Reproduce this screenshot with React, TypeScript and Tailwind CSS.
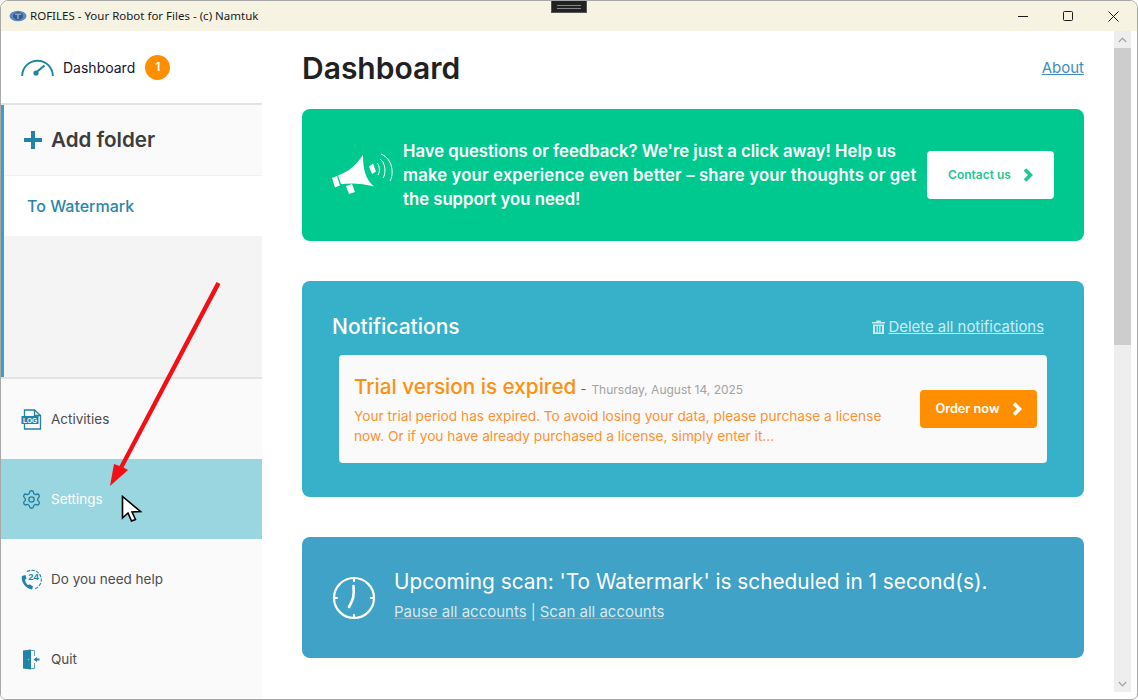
import React from "react";
import { Settings } from "lucide-react";

const font = "font-['Inter','Liberation_Sans',sans-serif]";

function Chevron({ className }: { className: string }) {
  return (
    <svg viewBox="0 0 10 14" className={className} fill="none" stroke="currentColor" strokeWidth="3.6">
      <path d="M2 1.5 L7.5 7 L2 12.5" />
    </svg>
  );
}

function Gauge() {
  return (
    <svg width="33" height="20" viewBox="0 0 33 20" fill="none" stroke="#2283a8" strokeWidth="1.9">
      <path d="M1.2 19 A15.3 15.3 0 0 1 31.8 19" />
      <path d="M15 15.5 L23.5 8.5" strokeWidth="2.2" />
      <circle cx="15" cy="16" r="2.6" fill="#2283a8" stroke="none" />
    </svg>
  );
}

function LogIcon() {
  return (
    <svg width="21" height="21" viewBox="0 0 21 21" fill="none" stroke="#2283a8" strokeWidth="1.3">
      <path d="M3.5 7 V1 H13.5 L19.5 6.5 V20 H3.5 V15" />
      <path d="M13.5 1 V6.5 H19.5" />
      <rect x="0.5" y="7" width="17" height="8" fill="#2283a8" stroke="none" />
      <text x="9" y="13.6" fontSize="6.5" fontWeight="700" fill="#fff" stroke="none" textAnchor="middle" fontFamily="Liberation Sans">LOG</text>
    </svg>
  );
}

function HelpIcon() {
  return (
    <svg width="21" height="21" viewBox="0 0 21 21" fill="none" stroke="#2283a8" strokeWidth="1.1">
      <path d="M6 2.5 A9.5 9.5 0 0 1 20.3 10.5 A9.5 9.5 0 0 1 14 19.7" strokeDasharray="3.4 1.2" />
      <path d="M1 7 C-0.5 12 4 19.5 11 20.5 L12 17.5 L8.5 15.2 L7 16.2 C5 14.5 4.2 12.5 4 10.5 L5.5 10 L4.5 6 Z" fill="#2283a8" stroke="none" />
      <text x="12.5" y="11.3" fontSize="9.5" fontWeight="700" fill="#2283a8" stroke="none" textAnchor="middle" fontFamily="Liberation Sans">24</text>
    </svg>
  );
}

function QuitIcon() {
  return (
    <svg width="18" height="21" viewBox="0 0 18 21" fill="none" stroke="#5aa7c4" strokeWidth="1">
      <path d="M1 1.5 L9 0.5 V20.5 L1 19.5 Z" fill="#2283a8" stroke="none" />
      <path d="M9 1.5 H12.5 V7 M12.5 14 V19.5 H9" />
      <path d="M17.5 10.5 H13" stroke="#2283a8" strokeWidth="1.8" />
      <path d="M15 8 L11.5 10.5 L15 13 Z" fill="#2283a8" stroke="none" />
      <circle cx="6.5" cy="10.5" r="0.8" fill="#8cc4da" stroke="none" />
    </svg>
  );
}

function Megaphone() {
  return (
    <svg width="62" height="44" viewBox="0 0 62 44" fill="#fff" stroke="none">
      <path d="M6 22.5 C18 18 24 12 31 2 C31 15 33 26 42 33.5 C30 30 20 30 9 31 Z" />
      <path d="M0 25 L5 23 L8 32.5 L3 34.5 Z" />
      <path d="M14 33 L20 31 L23 39 L17 41 Z" />
      <path d="M37 13.5 L41 10.5 L44 18.5 L40 21 Z" />
      <g fill="none" stroke="#fff" strokeWidth="1">
        <path d="M45 10 C48 13 48 19 46 22" />
        <path d="M48 6 C54 10 54 21 51 25" />
        <path d="M49 1 C61 6 62 21 58 28" />
      </g>
    </svg>
  );
}

function Clock() {
  return (
    <svg width="44" height="44" viewBox="0 0 44 44" fill="none" stroke="#fff" strokeWidth="2.2" strokeLinecap="round">
      <circle cx="22" cy="22" r="20" />
      <path d="M22 2 V5 M22 39 V42 M2 22 H5 M39 22 H42" />
      <path d="M21.5 10 C22.5 20 21 24 17 31" strokeWidth="2.6" />
    </svg>
  );
}

function Trash() {
  return (
    <svg width="13" height="14" viewBox="0 0 13 14" fill="#c9eef5">
      <path d="M4.5 0.5 H8.5 L9 2 H13 V3.5 H0 V2 H4 Z" />
      <path d="M1 4.5 H12 V14 H1 Z M3 6 V12.5 H4.5 V6 Z M5.8 6 V12.5 H7.2 V6 Z M8.5 6 V12.5 H10 V6 Z" fillRule="evenodd" />
    </svg>
  );
}

function NavRow({ icon, label, active }: { icon: React.ReactNode; label: string; active?: boolean }) {
  return (
    <div className={`flex h-20 items-center pl-[20px] ${active ? "bg-[#9ad6df]" : "bg-[#fafafa]"}`}>
      <div className="flex w-[30px] shrink-0 items-center">{icon}</div>
      <span className={`text-[13.5px] ${active ? "text-white" : "text-[#4d4d4d]"}`}>{label}</span>
    </div>
  );
}

export default function App() {
  return (
    <div className={`${font} relative flex h-[700px] w-[1138px] flex-col overflow-hidden rounded-t-lg rounded-b-[6px] border border-[#a8a8a8] bg-white`}>
      {/* Title bar */}
      <div className="flex h-[30px] shrink-0 items-center bg-[#f7f3e3]">
        <svg width="18" height="12" viewBox="0 0 18 12" className="ml-[8px]">
          <ellipse cx="9" cy="6" rx="8.5" ry="5.2" fill="#5b8ac2" />
          <ellipse cx="9" cy="6" rx="5" ry="4" fill="#3a5a8c" />
          <path d="M6 3.5 H12 V5 H9.8 V9 H8.2 V5 H6 Z" fill="#86a6cc" />
        </svg>
        <span className="ml-[3px] font-['Noto_Sans',sans-serif] text-[11.5px] text-[#1a1a1a]">ROFILES - Your Robot for Files - (c) Namtuk</span>
        <div className="flex-1" />
        <div className="flex w-[125px] items-center text-[#1a1a1a]">
          <span className="ml-[6px] h-px w-[10px] bg-[#1a1a1a]" />
          <span className="ml-[35px] h-[10px] w-[10px] rounded-[1.5px] border border-[#1a1a1a]" />
          <svg width="11" height="11" viewBox="0 0 11 11" className="ml-[35px]" stroke="#1a1a1a" strokeWidth="1"><path d="M0.5 0.5 L10.5 10.5 M10.5 0.5 L0.5 10.5" /></svg>
        </div>
      </div>

      <div className="flex min-h-0 flex-1">
        {/* Sidebar */}
        <aside className="flex w-[261px] shrink-0 flex-col">
          <div className="flex h-[72px] shrink-0 items-center pl-[20px]">
            <Gauge />
            <span className="ml-[9px] text-[14px] text-[#15132e]">Dashboard</span>
            <span className="ml-[10px] flex h-[25px] w-[25px] items-center justify-center rounded-full bg-[#ff8f00] text-[12px] font-semibold text-white">1</span>
          </div>
          <div className="h-[2px] shrink-0 bg-[#e3e3e3]" />
          <div className="flex h-[272px] shrink-0 flex-col border-l-[3px] border-[#3d9fc4] bg-[#f4f4f4]">
            <div className="flex h-[71px] items-center border-b border-[#f1f1f1] bg-[#fafafa] pl-[20px]">
              <svg width="18" height="18" viewBox="0 0 18 18" fill="#2283a8"><path d="M7 0 H11 V7 H18 V11 H11 V18 H7 V11 H0 V7 H7 Z" /></svg>
              <span className="ml-[9px] text-[20.6px] font-semibold leading-none text-[#3d3d3d]">Add folder</span>
            </div>
            <div className="flex h-[60px] items-center bg-white pl-[23px] text-[16px] font-medium text-[#2a86ab]">To Watermark</div>
          </div>
          <div className="h-[2px] shrink-0 bg-[#e3e3e3]" />
          <NavRow icon={<LogIcon />} label="Activities" />
          <NavRow icon={<Settings size={21} strokeWidth={1.5} color="#1f7ea3" />} label="Settings" active />
          <NavRow icon={<HelpIcon />} label="Do you need help" />
          <NavRow icon={<div className="ml-[1px]"><QuitIcon /></div>} label="Quit" />
        </aside>

        {/* Main */}
        <main className="flex min-w-0 flex-1 flex-col pl-[40px] pr-[30px]">
          <div className="flex h-[78px] shrink-0 items-center justify-between pb-[4px]">
            <h1 className="text-[30px] font-semibold text-[#212121]">Dashboard</h1>
            <a className="text-[15px] text-[#3d8fbc] underline">About</a>
          </div>

          <section className="flex h-[132px] shrink-0 items-center rounded-lg bg-[#00c98f] pl-[30px] pr-[30px] text-white">
            <Megaphone />
            <p className="ml-[9px] whitespace-nowrap text-[16.7px] font-semibold leading-[24px]">
              Have questions or feedback? We're just a click away! Help us<br />
              <span className="tracking-[0.15px]">make your experience even better – share your thoughts or get</span><br />
              the support you need!
            </p>
            <button className="ml-auto flex h-[48px] w-[127px] items-center justify-center gap-[12px] rounded bg-white text-[12px] font-semibold text-[#1fc794]">
              Contact us
              <Chevron className="h-[14px] w-[10px]" />
            </button>
          </section>

          <section className="mt-[40px] flex h-[216px] shrink-0 flex-col rounded-lg bg-[#37b0c9] pl-[30px] pr-[40px] pt-[33px]">
            <div className="flex items-center justify-between">
              <h2 className="text-[21px] font-medium leading-[26px] text-white">Notifications</h2>
              <a className="flex items-center gap-[4px] text-[14.9px] text-[#c9eef5]">
                <Trash />
                <span className="underline">Delete all notifications</span>
              </a>
            </div>
            <div className="ml-[7px] mt-[15px] flex h-[108px] w-[708px] items-center justify-between rounded bg-[#fafafa] pl-[15px] pr-[10px]">
              <div className="mb-[1px]">
                <div className="flex items-baseline">
                  <span className="text-[20.7px] font-medium text-[#ff8f0f]">Trial version is expired</span>
                  <span className="ml-[4px] text-[13px] text-[#666]">-</span>
                  <span className="ml-[5px] text-[12px] text-[#a3a3a3]">Thursday, August 14, 2025</span>
                </div>
                <p className="mt-[3px] w-[535px] text-[13.7px] leading-[20px] text-[#ff9133]">
                  Your trial period has expired. To avoid losing your data, please purchase a license now. Or if you have already purchased a license, simply enter it...
                </p>
              </div>
              <button className="flex h-[38px] w-[117px] items-center justify-center gap-[12px] rounded bg-[#ff8f00] text-[12.7px] font-semibold text-white">
                Order now
                <Chevron className="h-[14px] w-[10px]" />
              </button>
            </div>
          </section>

          <section className="mt-[40px] flex h-[121px] shrink-0 items-center rounded-lg bg-[#3fa2c6] pl-[30px] text-white">
            <Clock />
            <div className="mb-[6px] ml-[18px]">
              <div className="text-[20.8px] leading-[30px]">Upcoming scan: 'To Watermark' is scheduled in 1 second(s).</div>
              <div className="mt-[5px] flex gap-[4px] text-[15px] leading-[20px] text-[#d8e8ee]">
                <span className="underline decoration-[#7ab0c8]">Pause all accounts</span>
                <span>|</span>
                <span className="underline decoration-[#7ab0c8]">Scan all accounts</span>
              </div>
            </div>
          </section>
        </main>

        {/* Scrollbar */}
        <div className="mb-[7px] mr-[6px] flex w-[17px] shrink-0 flex-col bg-[#eeeeee]">
          <div className="flex h-[17px] items-center justify-center bg-[#eeeeee]">
            <svg width="9" height="6" viewBox="0 0 9 6" fill="none" stroke="#a8a8a8" strokeWidth="1.3"><path d="M0.8 5 L4.5 1.2 L8.2 5" /></svg>
          </div>
          <div className="h-[297px] bg-[#cdcdcd]" />
          <div className="flex-1" />
          <div className="flex h-[17px] items-center justify-center">
            <svg width="9" height="6" viewBox="0 0 9 6" fill="none" stroke="#a8a8a8" strokeWidth="1.3"><path d="M0.8 1 L4.5 4.8 L8.2 1" /></svg>
          </div>
        </div>
      </div>

      {/* Notch at top of the window */}
      <div className="absolute left-[550px] top-[-1px] flex h-[13px] w-[36px] flex-col items-center justify-center gap-[2px] border border-[#555] bg-[#222]">
        <span className="h-px w-[24px] bg-[#888]" />
        <span className="h-px w-[24px] bg-[#888]" />
      </div>

      {/* Annotation arrow */}
      <svg className="absolute left-[100px] top-[275px]" width="130" height="215" viewBox="0 0 130 215" fill="#f30f14">
        <path d="M115.5 6 L119.5 8 L22.5 191.5 L27 194 L9 210 L13 188 L18.5 190 Z" />
      </svg>

      {/* Mouse pointer */}
      <svg className="absolute left-[120px] top-[494px]" width="22" height="30" viewBox="0 0 22 30">
        <path d="M1.5 1.5 V23 L7 18 L10.5 26 L14.5 24.5 L11 17 L19.5 16.5 Z" fill="#fff" stroke="#000" strokeWidth="1.6" strokeLinejoin="miter" />
      </svg>
    </div>
  );
}
